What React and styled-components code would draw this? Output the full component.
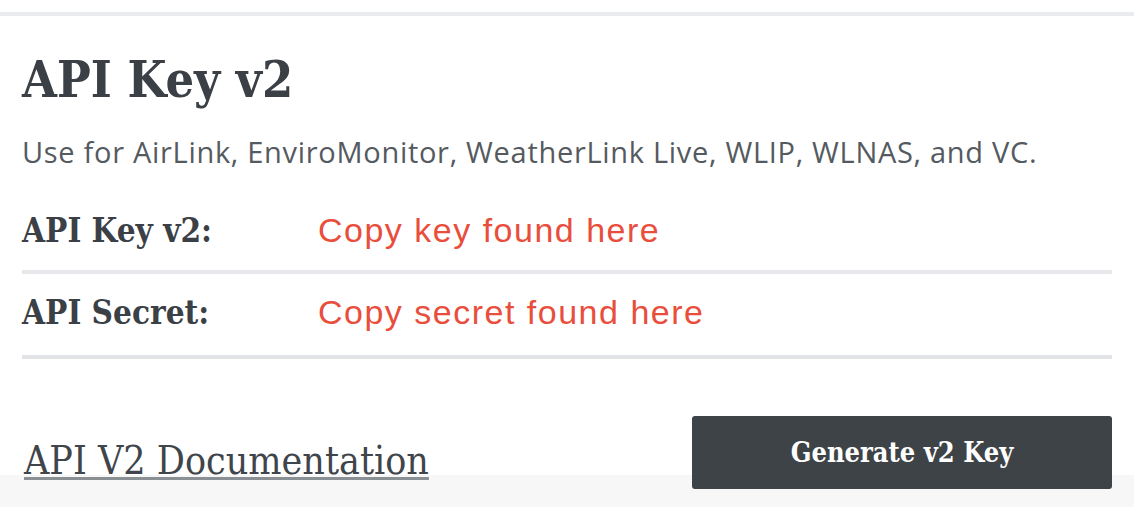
import React from "react";
import styled, { createGlobalStyle } from "styled-components";

const GlobalStyle = createGlobalStyle`
	html, body {
		margin: 0;
		padding: 0;
		background: #fff;
	}
	body {
		font-family: "Open Sans", "Liberation Sans", sans-serif;
		color: #3b4046;
	}
`;

const serif = `"DejaVu Serif", "Liberation Serif", serif`;

const Page = styled.div`
	width: 1134px;
	height: 524px;
	overflow: hidden;
	background: #fff;
`;

const TopRule = styled.div`
	margin-top: 12px;
	height: 4px;
	background: #e9ebee;
`;

const Content = styled.section`
	padding: 0 22px;
`;

const Title = styled.h2`
	margin: 34px 0 0;
	font-family: ${serif};
	font-stretch: condensed;
	font-weight: 700;
	font-size: 50px;
	line-height: 60px;
	color: #3b4046;
`;

const Subtitle = styled.p`
	margin: 24px 0 0;
	font-size: 29px;
	letter-spacing: 0.7px;
	line-height: 36px;
	color: #555a5f;
`;

const KeyList = styled.div`
	margin-top: 22px;
	display: flex;
	flex-direction: column;
`;

const KeyRow = styled.div`
	display: grid;
	grid-template-columns: 296px 1fr;
	align-items: baseline;
	padding: ${props => props.$top}px 0 ${props => props.$bottom}px;
	border-bottom: 4px solid ${props => props.$rule};
`;

const KeyLabel = styled.span`
	font-family: ${serif};
	font-stretch: condensed;
	font-weight: 700;
	font-size: 33px;
	line-height: 44px;
	color: #3b4046;
`;

const KeyValue = styled.span`
	font-family: "Liberation Sans", Arial, sans-serif;
	font-size: 34px;
	letter-spacing: 1.5px;
	line-height: 44px;
	color: #e94e3d;
`;

const Footer = styled.footer`
	margin-top: 57px;
	padding: 0 22px 18px;
	display: flex;
	justify-content: space-between;
	align-items: flex-end;
	background: linear-gradient(to bottom, #fff 0, #fff 59px, #f7f7f7 59px);
`;

const DocLink = styled.a`
	margin: 0 0 4px 2px;
	font-family: ${serif};
	font-stretch: condensed;
	font-size: 39px;
	line-height: 48px;
	color: #3f454b;
	text-decoration: underline;
	text-decoration-color: #8a8f94;
	text-decoration-thickness: 3px;
	text-underline-offset: 3px;
`;

const GenerateButton = styled.button`
	width: 420px;
	height: 73px;
	border: none;
	border-radius: 3px;
	background: #3d4347;
	color: #fff;
	font-family: ${serif};
	font-stretch: condensed;
	font-weight: 700;
	font-size: 27px;
	cursor: pointer;
`;

const keys = [
	{ label: "API Key v2:", value: "Copy key found here", top: 16, bottom: 17, rule: "#e6e8eb" },
	{ label: "API Secret:", value: "Copy secret found here", top: 16, bottom: 20, rule: "#e1e3e6" },
];

const App = () => {
	return <Page>
		<GlobalStyle />
		<TopRule />
		<Content>
			<Title>API Key v2</Title>
			<Subtitle>Use for AirLink, EnviroMonitor, WeatherLink Live, WLIP, WLNAS, and VC.</Subtitle>
			<KeyList>
				{keys.map(k => (
					<KeyRow key={k.label} $top={k.top} $bottom={k.bottom} $rule={k.rule}>
						<KeyLabel>{k.label}</KeyLabel>
						<KeyValue>{k.value}</KeyValue>
					</KeyRow>
				))}
			</KeyList>
		</Content>
		<Footer>
			<DocLink href="#">API V2 Documentation</DocLink>
			<GenerateButton>Generate v2 Key</GenerateButton>
		</Footer>
	</Page>;
};

export default App;
